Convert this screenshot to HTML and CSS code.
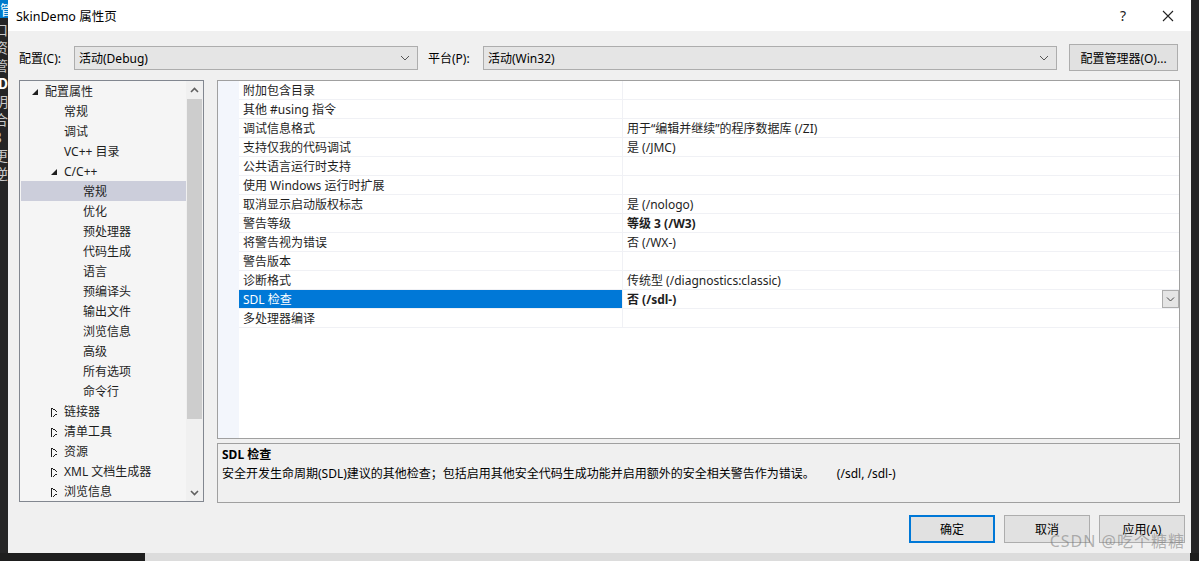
FILE: index.html
```html
<!DOCTYPE html>
<html lang="zh">
<head>
    <meta charset="UTF-8">
    <title>SkinDemo 属性页</title>
    <link rel="stylesheet" href="styles.css">
</head>
<body>
<div class="screen">
    <div class="side-strip">
        <span class="strip-blue">管</span>
        <span>口</span><span>资</span><span>管</span><span class="strip-bold">D</span><span>明</span><span>合</span><span>3</span><span>更</span><span>逆</span>
    </div>

    <div class="dialog">
        <div class="titlebar">
            <span class="title">SkinDemo 属性页</span>
            <span class="title-btn">?</span>
            <span class="title-btn close">
                <svg width="12" height="12" viewBox="0 0 12 12"><path d="M1 1 L11 11 M11 1 L1 11" stroke="#222" stroke-width="1.1"/></svg>
            </span>
        </div>

        <div class="config-row">
            <span class="label">配置(C):</span>
            <div class="combo combo-config">
                <span>活动(Debug)</span>
                <svg width="10" height="6" viewBox="0 0 10 6"><path d="M1 1 L5 5 L9 1" fill="none" stroke="#555" stroke-width="1"/></svg>
            </div>
            <span class="label label-platform">平台(P):</span>
            <div class="combo combo-platform">
                <span>活动(Win32)</span>
                <svg width="10" height="6" viewBox="0 0 10 6"><path d="M1 1 L5 5 L9 1" fill="none" stroke="#555" stroke-width="1"/></svg>
            </div>
            <button class="btn btn-manager">配置管理器(O)...</button>
        </div>

        <div class="main">
            <div class="tree">
                <div class="tree-items">
                    <div class="node lv0"><span class="arrow open"></span>配置属性</div>
                    <div class="node lv1">常规</div>
                    <div class="node lv1">调试</div>
                    <div class="node lv1">VC++ 目录</div>
                    <div class="node lv1"><span class="arrow open"></span>C/C++</div>
                    <div class="node lv2 selected">常规</div>
                    <div class="node lv2">优化</div>
                    <div class="node lv2">预处理器</div>
                    <div class="node lv2">代码生成</div>
                    <div class="node lv2">语言</div>
                    <div class="node lv2">预编译头</div>
                    <div class="node lv2">输出文件</div>
                    <div class="node lv2">浏览信息</div>
                    <div class="node lv2">高级</div>
                    <div class="node lv2">所有选项</div>
                    <div class="node lv2">命令行</div>
                    <div class="node lv1"><span class="arrow closed"></span>链接器</div>
                    <div class="node lv1"><span class="arrow closed"></span>清单工具</div>
                    <div class="node lv1"><span class="arrow closed"></span>资源</div>
                    <div class="node lv1"><span class="arrow closed"></span>XML 文档生成器</div>
                    <div class="node lv1"><span class="arrow closed"></span>浏览信息</div>
                </div>
                <div class="scrollbar">
                    <div class="sb-arrow">
                        <svg width="9" height="6" viewBox="0 0 9 6"><path d="M1 5 L4.5 1.5 L8 5" fill="none" stroke="#606060" stroke-width="1.6"/></svg>
                    </div>
                    <div class="sb-track"><div class="sb-thumb"></div></div>
                    <div class="sb-arrow">
                        <svg width="9" height="6" viewBox="0 0 9 6"><path d="M1 1 L4.5 4.5 L8 1" fill="none" stroke="#606060" stroke-width="1.6"/></svg>
                    </div>
                </div>
            </div>

            <div class="right-col">
                <div class="grid">
                    <div class="gutter"></div>
                    <div class="rows">
                        <div class="row"><div class="name">附加包含目录</div><div class="value"></div></div>
                        <div class="row"><div class="name">其他 #using 指令</div><div class="value"></div></div>
                        <div class="row"><div class="name">调试信息格式</div><div class="value">用于“编辑并继续”的程序数据库 (/ZI)</div></div>
                        <div class="row"><div class="name">支持仅我的代码调试</div><div class="value">是 (/JMC)</div></div>
                        <div class="row"><div class="name">公共语言运行时支持</div><div class="value"></div></div>
                        <div class="row"><div class="name">使用 Windows 运行时扩展</div><div class="value"></div></div>
                        <div class="row"><div class="name">取消显示启动版权标志</div><div class="value">是 (/nologo)</div></div>
                        <div class="row"><div class="name">警告等级</div><div class="value bold">等级 3 (/W3)</div></div>
                        <div class="row"><div class="name">将警告视为错误</div><div class="value">否 (/WX-)</div></div>
                        <div class="row"><div class="name">警告版本</div><div class="value"></div></div>
                        <div class="row"><div class="name">诊断格式</div><div class="value">传统型 (/diagnostics:classic)</div></div>
                        <div class="row active">
                            <div class="name">SDL 检查</div>
                            <div class="value bold">否 (/sdl-)
                                <span class="drop">
                                    <svg width="9" height="5" viewBox="0 0 9 5"><path d="M1 0.5 L4.5 4 L8 0.5" fill="none" stroke="#444" stroke-width="1"/></svg>
                                </span>
                            </div>
                        </div>
                        <div class="row"><div class="name">多处理器编译</div><div class="value"></div></div>
                    </div>
                </div>

                <div class="desc">
                    <div class="desc-title">SDL 检查</div>
                    <div class="desc-text">安全开发生命周期(SDL)建议的其他检查；包括启用其他安全代码生成功能并启用额外的安全相关警告作为错误。<span class="desc-flag">(/sdl, /sdl-)</span></div>
                </div>
            </div>
        </div>

        <div class="footer">
            <button class="btn btn-ok">确定</button>
            <button class="btn">取消</button>
            <button class="btn">应用(A)</button>
        </div>
        <div class="watermark">CSDN @吃个糖糖</div>
    </div>

    <div class="side-strip right"></div>
</div>
<div class="bottom-strip">
    <div class="bottom-dark"></div>
    <div class="bottom-light"></div>
</div>
</body>
</html>
```

FILE: styles.css
```css
* {
    box-sizing: border-box;
}
body {
    margin: 0;
    width: 1199px;
    height: 561px;
    overflow: hidden;
    background-color: #1e1e1e;
    font-family: "Noto Sans", "Noto Sans CJK SC", sans-serif;
    font-size: 12px;
    color: #1e1e1e;
}
.screen {
    display: flex;
    height: 553px;
}
.side-strip {
    width: 8px;
    background-color: #252526;
    display: flex;
    flex-direction: column;
    overflow: hidden;
    color: #c8c8c8;
    font-family: "Noto Sans CJK SC", sans-serif;
    font-size: 14px;
    line-height: 18px;
}
.side-strip span {
    margin-left: -6px;
}
.side-strip .strip-blue {
    background-color: #007acc;
    color: #fff;
    margin-left: -6px;
    padding-left: 6px;
    margin-bottom: 2px;
}
.side-strip .strip-bold {
    color: #fff;
    font-weight: bold;
    margin-left: -2px;
}
.side-strip.right {
    width: 8px;
}

/* dialog */
.dialog {
    position: relative;
    width: 1183px;
    background-color: #f0f0f0;
    display: flex;
    flex-direction: column;
}
.titlebar {
    height: 31px;
    background-color: #fff;
    display: flex;
    align-items: center;
    padding-left: 8px;
}
.title {
    flex: 1;
    font-size: 12.5px;
    color: #000;
}
.title-btn {
    width: 44px;
    height: 31px;
    display: flex;
    align-items: center;
    justify-content: center;
    font-size: 14px;
    color: #222;
}
.title-btn.close {
    width: 46px;
}

.config-row {
    display: flex;
    align-items: center;
    height: 27px;
    margin-top: 13px;
    padding-left: 11px;
}
.label {
    width: 55px;
    color: #000;
}
.label-platform {
    margin-left: 10px;
}
.combo {
    height: 24px;
    background-color: #e5e5e5;
    border: 1px solid #adadad;
    display: flex;
    align-items: center;
    justify-content: space-between;
    padding: 0 7px 0 4px;
    color: #000;
}
.combo-config {
    width: 344px;
}
.combo-platform {
    width: 574px;
}
.btn {
    height: 28px;
    width: 86px;
    background-color: #e1e1e1;
    border: 1px solid #adadad;
    font-family: inherit;
    font-size: 12px;
    color: #000;
    padding: 0;
}
.btn-manager {
    width: 109px;
    height: 27px;
    margin-left: 12px;
}

.main {
    display: flex;
    gap: 13px;
    margin-top: 9px;
    padding-left: 11px;
}

/* tree */
.tree {
    width: 185px;
    height: 422px;
    border: 1px solid #828790;
    background-color: #f5f5f5;
    display: flex;
    padding: 0 0 0 1px;
}
.tree-items {
    flex: 1;
    overflow: hidden;
}
.node {
    height: 20px;
    line-height: 20px;
    padding-top: 1px;
    position: relative;
    white-space: nowrap;
    color: #1e1e1e;
}
.node.lv0 {
    padding-left: 24px;
}
.node.lv1 {
    padding-left: 43px;
}
.node.lv2 {
    padding-left: 62px;
}
.node.selected {
    background-color: #cccedb;
}
.arrow {
    position: absolute;
    top: 8px;
}
.lv0 .arrow {
    left: 11px;
}
.lv1 .arrow {
    left: 30px;
}
.arrow.open {
    width: 0;
    height: 0;
    border-left: 6px solid transparent;
    border-bottom: 6px solid #1e1e1e;
}
.arrow.closed {
    top: 7px;
    width: 6px;
    height: 9px;
    background:
        linear-gradient(to top right, transparent 48%, #1e1e1e 48%, #1e1e1e 60%, transparent 60%) top / 6px 4.5px no-repeat,
        linear-gradient(to bottom right, transparent 48%, #1e1e1e 48%, #1e1e1e 60%, transparent 60%) bottom / 6px 4.5px no-repeat;
    border-left: 1px solid #1e1e1e;
}
.scrollbar {
    width: 17px;
    background-color: #f0f0f0;
    display: flex;
    flex-direction: column;
}
.sb-arrow {
    height: 17px;
    display: flex;
    align-items: center;
    justify-content: center;
}
.sb-track {
    flex: 1;
    padding: 1px 1px 0 1px;
}
.sb-thumb {
    height: 320px;
    background-color: #cdcdcd;
}

/* property grid */
.right-col {
    width: 963px;
    display: flex;
    flex-direction: column;
    gap: 4px;
}
.grid {
    height: 359px;
    border: 1px solid #a0a0a0;
    background-color: #fff;
    display: flex;
}
.gutter {
    width: 21px;
    background-color: #f3f6fc;
}
.rows {
    flex: 1;
}
.row {
    display: flex;
    height: 19px;
    border-bottom: 1px solid #f0f1f5;
}
.row .name {
    width: 384px;
    line-height: 18px;
    padding: 1px 0 0 4px;
    border-right: 1px solid #f0f1f5;
    color: #1e1e1e;
}
.row .value {
    flex: 1;
    line-height: 18px;
    padding: 1px 0 0 4px;
    color: #1e1e1e;
    display: flex;
    justify-content: space-between;
}
.row .value.bold {
    font-weight: bold;
}
.row.active .name {
    background-color: #0078d7;
    color: #fff;
}
.row.active .value {
    padding-top: 0;
}
.drop {
    width: 17px;
    height: 18px;
    background-color: #e5e5e5;
    border: 1px solid #adadad;
    display: flex;
    align-items: center;
    justify-content: center;
}
.row.active .value {
    line-height: 19px;
}

.desc {
    height: 60px;
    border: 1px solid #a0a0a0;
    background-color: #f0f0f0;
    padding: 1px 4px;
    line-height: 19px;
}
.desc-title {
    font-weight: bold;
    color: #000;
}
.desc-text {
    color: #000;
}
.desc-flag {
    margin-left: 22px;
}

.footer {
    display: flex;
    justify-content: flex-end;
    gap: 9px;
    margin-top: 12px;
    padding-right: 6px;
}
.btn-ok {
    border: 2px solid #0078d7;
}
.watermark {
    position: absolute;
    right: 6px;
    bottom: 1px;
    font-size: 16px;
    color: rgba(120, 120, 120, 0.55);
    letter-spacing: 1px;
}

.bottom-strip {
    display: flex;
    height: 8px;
}
.bottom-dark {
    width: 145px;
    background-color: #1e1e1e;
}
.bottom-light {
    flex: 1;
    background-color: #dcdcdc;
    margin-right: 9px;
}
```
